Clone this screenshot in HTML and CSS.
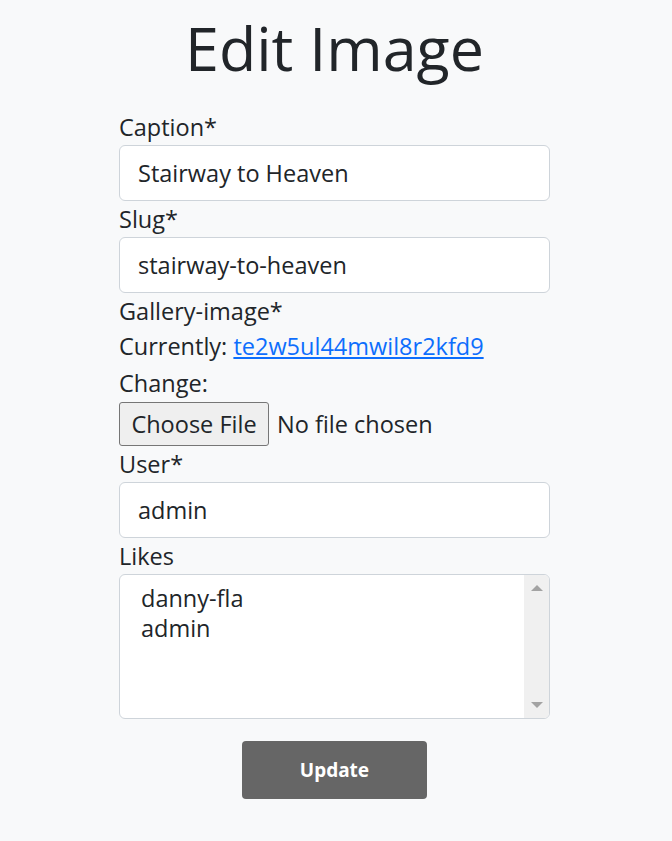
FILE: index.html
```html
<!DOCTYPE html>
<html lang="en">
<head>
<meta charset="utf-8">
<title>Edit Image</title>
<link rel="stylesheet" href="styles.css">
</head>
<body>
<main class="page">
  <h1 class="title">Edit Image</h1>
  <form class="form">
    <label class="label" for="caption">Caption*</label>
    <input class="input" id="caption" type="text" value="Stairway to Heaven">

    <label class="label" for="slug">Slug*</label>
    <input class="input" id="slug" type="text" value="stairway-to-heaven">

    <div class="label">Gallery-image*</div>
    <div class="line line-current">Currently: <a class="link" href="#">te2w5ul44mwil8r2kfd9</a></div>
    <div class="line line-change">Change:</div>
    <div class="file-row">
      <span class="file-btn">Choose File</span>
      <span class="file-text">No file chosen</span>
    </div>

    <label class="label" for="user">User*</label>
    <input class="input" id="user" type="text" value="admin">

    <div class="label">Likes</div>
    <div class="multi">
      <div class="multi-list">
        <div class="opt">danny-fla</div>
        <div class="opt">admin</div>
      </div>
      <div class="multi-bar">
        <span class="arrow-up"></span>
        <span class="arrow-down"></span>
      </div>
    </div>

    <div class="actions">
      <button class="btn" type="button">Update</button>
    </div>
  </form>
</main>
</body>
</html>
```

FILE: styles.css
```css
* { box-sizing: border-box; }
html, body { margin: 0; padding: 0; }
body {
  background: #f8f9fa;
  color: #212529;
  font-family: "Open Sans", "Noto Sans", sans-serif;
  width: 672px;
  height: 841px;
  padding-right: 3px;
}
.page {
  width: 431px;
  margin: 0 auto;
}
.title {
  margin: 0;
  padding-top: 12px;
  height: 112px;
  text-align: center;
  font-weight: 400;
  font-size: 61px;
  line-height: 72px;
}
.form { display: flex; flex-direction: column; }
.label, .line {
  display: block;
  font-size: 23.5px;
  line-height: 30px;
  margin: 0;
}
.label { margin-bottom: 3px; }
.line-current { margin-top: 2px; }
.line-change { margin-top: 7px; }
.input {
  display: block;
  width: 100%;
  height: 56px;
  margin: 0 0 3px;
  padding: 0 18px;
  border: 1px solid #ced4da;
  border-radius: 6px;
  background: #fff;
  color: #212529;
  font-family: inherit;
  font-size: 23.5px;
}
.link { color: #0d6efd; text-decoration: underline; }
.file-row {
  display: flex;
  align-items: center;
  margin-top: 4px;
  margin-bottom: 3px;
  height: 44px;
}
.file-btn {
  display: inline-flex;
  align-items: center;
  justify-content: center;
  width: 150px;
  height: 44px;
  background: #efefef;
  border: 1px solid #767676;
  border-radius: 3px;
  font-size: 23.5px;
}
.file-text { font-size: 23.5px; margin-left: 8px; }
.multi {
  display: flex;
  height: 145px;
  border: 1px solid #ced4da;
  border-radius: 6px;
  background: #fff;
  overflow: hidden;
}
.multi-list { flex: 1; padding: 8px 21px; }
.opt { font-size: 23.5px; line-height: 30px; }
.multi-bar {
  width: 25px;
  background: #f0f0f0;
  display: flex;
  flex-direction: column;
  justify-content: space-between;
  align-items: center;
  padding: 10px 0 10px;
}
.arrow-up, .arrow-down {
  width: 0; height: 0;
  border-left: 6px solid transparent;
  border-right: 6px solid transparent;
}
.arrow-up { border-bottom: 6px solid #a3a3a3; }
.arrow-down { border-top: 6px solid #a3a3a3; }
.actions { display: flex; justify-content: center; margin-top: 22px; }
.btn {
  width: 185px;
  height: 58px;
  border: 0;
  border-radius: 4px;
  background: #666;
  color: #fff;
  font-family: "Noto Sans", "Open Sans", sans-serif;
  font-weight: 700;
  font-size: 19px;
}
```
